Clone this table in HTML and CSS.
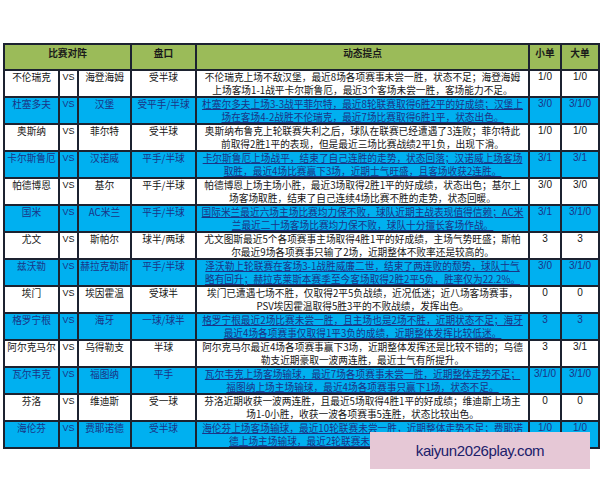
FILE: index.html
```html
<!DOCTYPE html>
<html>
<head>
<meta charset="utf-8">
<link rel="stylesheet" href="styles.css">
</head>
<body>
<div class="page">
<table class="tbl">
<colgroup>
<col class="c-home"><col class="c-vs"><col class="c-away"><col class="c-pan"><col class="c-desc"><col class="c-s"><col class="c-b">
</colgroup>
<thead>
<tr class="head"><th colspan="3">比赛对阵</th><th>盘口</th><th>动态提点</th><th>小单</th><th>大单</th></tr>
</thead>
<tbody>
<tr class="w"><td>不伦瑞克</td><td class="vs">VS</td><td>海登海姆</td><td>受半球</td><td class="desc">不伦瑞克上场不敌汉堡，最近8场各项赛事未尝一胜，状态不足；海登海姆<br>上场客场1-1战平卡尔斯鲁厄，最近3个客场未尝一胜，客场能力不足。</td><td class="num">1/0</td><td class="num">1/0</td></tr>
<tr class="b"><td>杜塞多夫</td><td class="vs">VS</td><td>汉堡</td><td>受平手/半球</td><td class="desc"><span>杜塞尔多夫上场3-3战平菲尔特，最近8轮联赛取得6胜2平的好成绩；汉堡上</span><br><span>场在客场4-2战胜不伦瑞克，最近7场比赛取得6胜1平，状态出色。</span></td><td class="num">3/0</td><td class="num">3/1/0</td></tr>
<tr class="w"><td>奥斯纳</td><td class="vs">VS</td><td>菲尔特</td><td>受半球</td><td class="desc">奥斯纳布鲁克上轮联赛失利之后，球队在联赛已经遭遇了3连败；菲尔特此<br>前取得2胜1平的表现，但是最近三场比赛战绩2平1负，出现下滑。</td><td class="num">1/0</td><td class="num">1/0</td></tr>
<tr class="b"><td>卡尔斯鲁厄</td><td class="vs">VS</td><td>汉诺威</td><td>平手/半球</td><td class="desc"><span>卡尔斯鲁厄上场战平，结束了自己连胜的走势，状态回落；汉诺威上场客场</span><br><span>取胜，最近4场比赛赢下3场，近期士气旺盛，且客场收获2连胜。</span></td><td class="num">3/1</td><td class="num">3/1</td></tr>
<tr class="w"><td>帕德博恩</td><td class="vs">VS</td><td>基尔</td><td>平手/半球</td><td class="desc">帕德博恩上场主场小胜，最近3场取得2胜1平的好成绩，状态出色；基尔上<br>场客场取胜，结束了自己连续4场比赛不胜的走势，状态回暖。</td><td class="num">3/0</td><td class="num">3/0</td></tr>
<tr class="b"><td>国米</td><td class="vs">VS</td><td>AC米兰</td><td>平手/半球</td><td class="desc"><span>国际米兰最近六场主场比赛均力保不败，球队近期主战表现值得信赖；AC米</span><br><span>兰最近二十场客场比赛均力保不败，球队十分擅长客场作战。</span></td><td class="num">3/1</td><td class="num">3/1/0</td></tr>
<tr class="w"><td>尤文</td><td class="vs">VS</td><td>斯帕尔</td><td>球半/两球</td><td class="desc">尤文图斯最近5个各项赛事主场取得4胜1平的好成绩，主场气势旺盛；斯帕<br>尔最近9场各项赛事只输了2场，近期整体不败率还是较高的。</td><td class="num">3</td><td class="num">3</td></tr>
<tr class="b"><td>兹沃勒</td><td class="vs">VS</td><td>赫拉克勒斯</td><td>平手/半球</td><td class="desc"><span>泽沃勒上轮联赛在客场3-1战胜威廉二世，结束了两连败的颓势，球队士气</span><br><span>略有回升；赫拉克莱斯本赛季至今客场取得2胜2平5负，胜率仅为22.2%。</span></td><td class="num">3/0</td><td class="num">3/1/0</td></tr>
<tr class="w"><td>埃门</td><td class="vs">VS</td><td>埃因霍温</td><td>受球半</td><td class="desc">埃门已遭遇七场不胜，仅取得2平5负战绩，近况低迷；近八场客场赛事，<br>PSV埃因霍温取得5胜3平的不败战绩，发挥出色。</td><td class="num">0</td><td class="num">0</td></tr>
<tr class="b"><td>格罗宁根</td><td class="vs">VS</td><td>海牙</td><td>一球/球半</td><td class="desc"><span>格罗宁根最近2场比赛未尝一胜，且主场也是2场不胜，近期状态不足；海牙</span><br><span>最近4场各项赛事仅取得1平3负的成绩，近期整体发挥比较低迷。</span></td><td class="num">3</td><td class="num">3</td></tr>
<tr class="w"><td>阿尔克马尔</td><td class="vs">VS</td><td>乌得勒支</td><td>半球</td><td class="desc">阿尔克马尔最近4场各项赛事赢下3场，近期整体发挥还是比较不错的；乌德<br>勒支近期豪取一波两连胜，最近士气有所提升。</td><td class="num">3</td><td class="num">3/1</td></tr>
<tr class="b"><td>瓦尔韦克</td><td class="vs">VS</td><td>福图纳</td><td>平手</td><td class="desc"><span>瓦尔韦克上场客场输球，最近7场各项赛事未尝一胜，近期整体走势不足；</span><br><span>福图纳上场主场输球，最近4场各项赛事只赢下1场，状态不足。</span></td><td class="num">3/1/0</td><td class="num">3/1/0</td></tr>
<tr class="w"><td>芬洛</td><td class="vs">VS</td><td>维迪斯</td><td>受一球</td><td class="desc">芬洛近期收获一波两连胜，且最近5场取得4胜1平的好成绩；维迪斯上场主<br>场1-0小胜，收获一波各项赛事5连胜，状态比较出色。</td><td class="num">0</td><td class="num">0</td></tr>
<tr class="b"><td>海伦芬</td><td class="vs">VS</td><td>费耶诺德</td><td>受半球</td><td class="desc"><span>海伦芬上场客场输球，最近10轮联赛未尝一胜，近期整体走势不足；费耶诺</span><br><span>德上场主场输球，最近2轮联赛未尝一胜，状态还是不算理想。</span></td><td class="num">1/0</td><td class="num">1/0</td></tr>
</tbody>
</table>
<div class="mark">kaiyun2026play.com</div>
</div>
</body>
</html>
```
FILE: styles.css
```css
html, body {
  margin: 0;
  padding: 0;
  background: #ffffff;
}
.page {
  position: relative;
  width: 600px;
  height: 480px;
  padding-top: 43px;
  padding-left: 3px;
  box-sizing: border-box;
}
.tbl {
  border-collapse: collapse;
  table-layout: fixed;
  width: 595px;
  font-family: "Noto Sans CJK SC", "Noto Sans", sans-serif;
  font-size: 9.7px;
  line-height: 12.5px;
  color: #151515;
}
.c-home { width: 55px; }
.c-vs { width: 19px; }
.c-away { width: 53px; }
.c-pan { width: 65px; }
.c-desc { width: 333px; }
.c-s { width: 32px; }
.c-b { width: 38px; }
.tbl th, .tbl td {
  border: 2px solid #1c2230;
  padding: 0;
  text-align: center;
  vertical-align: top;
  white-space: nowrap;
  overflow: hidden;
}
.head {
  height: 26px;
  background: #9bbb59;
}
.head th {
  font-weight: bold;
  padding-top: 2px;
  color: #1a1a1a;
}
.tbl tbody tr {
  height: 26px;
}
.tbl td {
  padding-top: 0;
}
.w { background: #ffffff; }
.b { background: #00b0f0; color: #1b3486; }
.vs {
  font-family: "Liberation Sans", Arial, sans-serif;
  font-size: 9px;
}
.num {
  font-family: "Liberation Sans", Arial, sans-serif;
  font-size: 10px;
}
.b .desc span {
  text-decoration: underline;
  text-decoration-thickness: 1px;
  text-underline-offset: 1px;
}
.mark {
  position: absolute;
  left: 370px;
  top: 432px;
  width: 220px;
  height: 37px;
  background: #e6c8d6;
  color: #20206a;
  font-family: "Liberation Sans", Arial, sans-serif;
  font-size: 15px;
  letter-spacing: -0.4px;
  line-height: 37px;
  text-align: center;
}
```
